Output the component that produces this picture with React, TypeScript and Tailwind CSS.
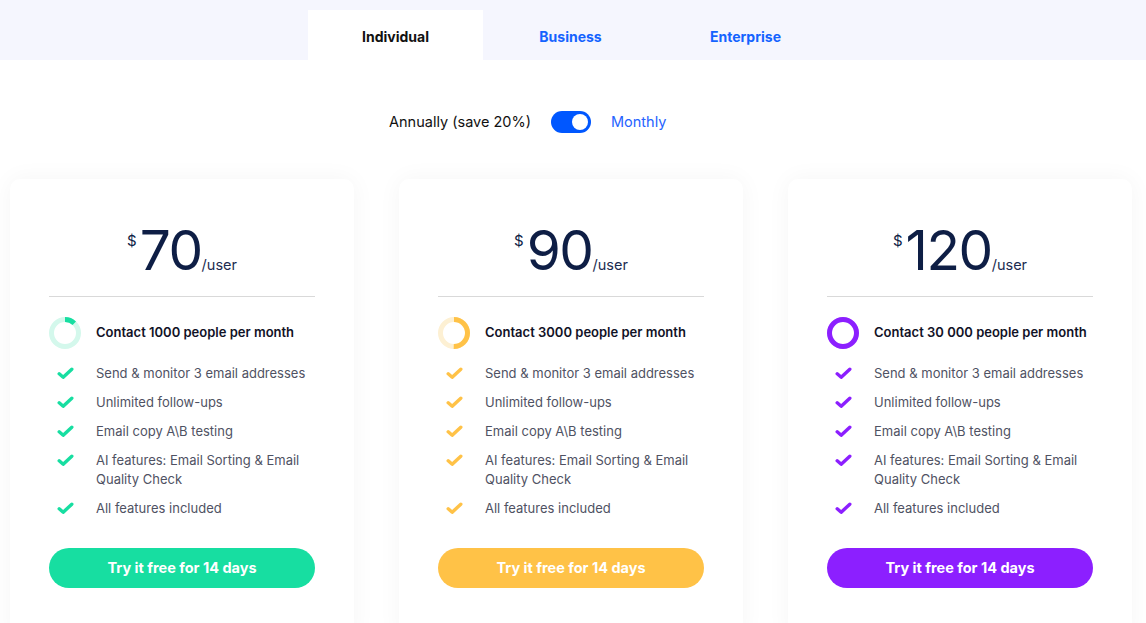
import React from 'react';

type Plan = {
  price: string;
  contacts: string;
  color: string;
  track: string;
  progress: number;
  btn: string;
};

const plans: Plan[] = [
  { price: '70', contacts: 'Contact 1000 people per month', color: '#17dea1', track: '#d4f8ec', progress: 0.12, btn: 'bg-[#17dea1]' },
  { price: '90', contacts: 'Contact 3000 people per month', color: '#ffc247', track: '#fdf0d3', progress: 0.5, btn: 'bg-[#ffc247]' },
  { price: '120', contacts: 'Contact 30 000 people per month', color: '#8c1fff', track: '#ead7ff', progress: 1, btn: 'bg-[#8c1fff]' },
];

const features = [
  'Send & monitor 3 email addresses',
  'Unlimited follow-ups',
  'Email copy A\\B testing',
  'AI features: Email Sorting & Email Quality Check',
  'All features included',
];

function Ring({ color, track, progress }: { color: string; track: string; progress: number }) {
  const r = 13.5;
  const c = 2 * Math.PI * r;
  return (
    <svg width="32" height="32" viewBox="0 0 32 32" className="shrink-0">
      <circle cx="16" cy="16" r={r} fill="none" stroke={track} strokeWidth="5" />
      <circle
        cx="16"
        cy="16"
        r={r}
        fill="none"
        stroke={color}
        strokeWidth="5"
        strokeDasharray={`${c * progress} ${c}`}
        transform="rotate(-90 16 16)"
      />
    </svg>
  );
}

function Check({ color }: { color: string }) {
  return (
    <svg width="17" height="13" viewBox="0 0 17 13" className="shrink-0">
      <path d="M2.2 6.8 L6.2 10.2 L14.8 2.2" fill="none" stroke={color} strokeWidth="3.4" strokeLinecap="round" strokeLinejoin="round" />
    </svg>
  );
}

function Card({ plan }: { plan: Plan }) {
  return (
    <div className="w-[344px] h-[460px] shrink-0 rounded-[10px] bg-white shadow-[0_0_24px_rgba(0,0,0,0.045)] pt-[44px] px-[39px]">
      <div className="flex items-baseline justify-center text-[#0e1e45]">
        <span className="self-start mt-[10px] mr-[3px] text-[15px] leading-none">$</span>
        <span className="text-[55px] leading-none tracking-[-1.5px]">{plan.price}</span>
        <span className="text-[14.5px] leading-none text-[#1c2b50]">/user</span>
      </div>
      <div className="mt-[18px] h-px bg-[#d9d9d9]" />
      <div className="mt-[20px] flex items-center gap-[15px]">
        <Ring color={plan.color} track={plan.track} progress={plan.progress} />
        <span className="whitespace-nowrap text-[13px] font-semibold text-[#111226]">{plan.contacts}</span>
      </div>
      <ul className="mt-[15px] flex flex-col gap-[10px]">
        {features.map((f) => (
          <li key={f} className="flex items-start">
            <span className="w-[47px] shrink-0 pl-[8px] pt-[3px]">
              <Check color={plan.color} />
            </span>
            <span className="text-[13px] leading-[19px] text-[#4f5263]">{f}</span>
          </li>
        ))}
      </ul>
      <button className={`mt-[30px] w-full h-[40px] rounded-full ${plan.btn} text-white text-[14.5px] font-bold`}>
        Try it free for 14 days
      </button>
    </div>
  );
}

export default function App() {
  return (
    <div className="w-[1146px] h-[623px] overflow-hidden bg-white font-['Inter','Liberation_Sans',sans-serif]">
      <div className="h-[60px] bg-[#f5f6fe] flex justify-center items-end pr-[5px]">
        <div className="w-[175px] h-[50px] pt-[2px] bg-white flex items-center justify-center text-[14px] font-bold text-[#111]">Individual</div>
        <div className="w-[175px] h-[50px] pt-[2px] flex items-center justify-center text-[14px] font-bold text-[#1463ff]">Business</div>
        <div className="w-[175px] h-[50px] pt-[2px] flex items-center justify-center text-[14px] font-bold text-[#1463ff]">Enterprise</div>
      </div>
      <div className="mt-[51px] grid grid-cols-[1fr_auto_1fr] items-center gap-[20px] pr-[4px]">
        <span className="justify-self-end text-[14.5px] text-[#111]">Annually (save 20%)</span>
        <div className="w-[40px] h-[22px] rounded-full bg-[#0057ff] flex items-center justify-end pr-[3px]">
          <div className="w-[16px] h-[16px] rounded-full bg-white" />
        </div>
        <span className="justify-self-start text-[14.5px] text-[#2563ff]">Monthly</span>
      </div>
      <div className="mt-[46px] flex gap-[45px] pl-[10px]">
        {plans.map((p) => (
          <Card key={p.price} plan={p} />
        ))}
      </div>
    </div>
  );
}
